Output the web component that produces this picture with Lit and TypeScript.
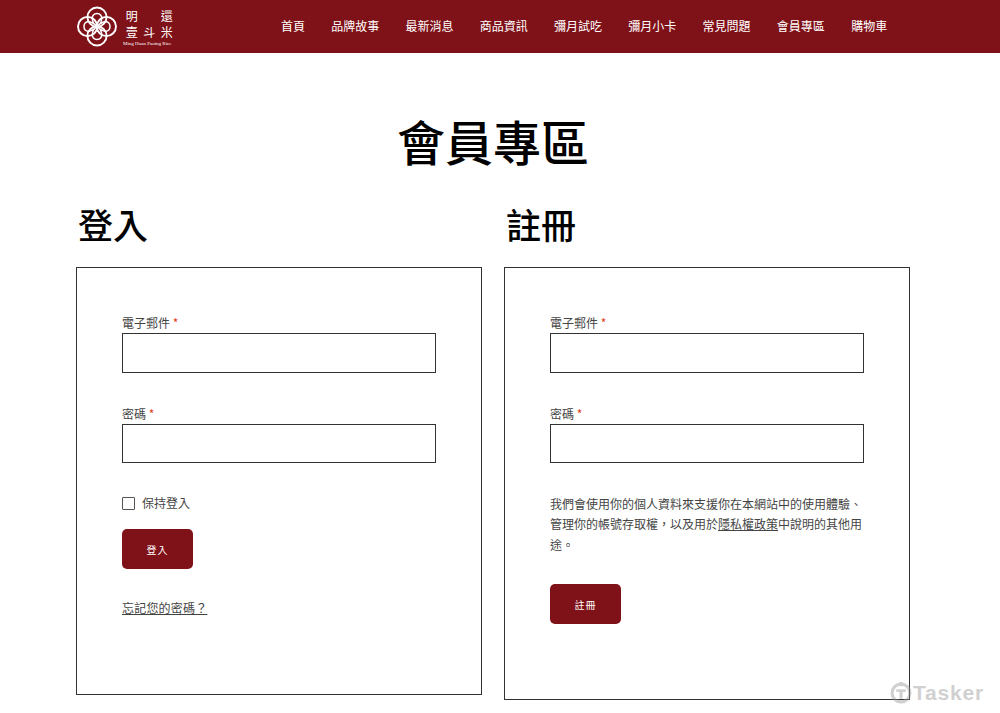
import { LitElement, html, css, svg } from 'lit';
import { customElement } from 'lit/decorators.js';

const NAV = ['首頁', '品牌故事', '最新消息', '商品資訊', '彌月試吃', '彌月小卡', '常見問題', '會員專區', '購物車'];

const knot = svg`
  <g fill="none" stroke="#fff" stroke-width="1.9">
    <circle cx="20" cy="10.6" r="9.6" />
    <circle cx="20" cy="29.4" r="9.6" />
    <circle cx="10.6" cy="20" r="9.6" />
    <circle cx="29.4" cy="20" r="9.6" />
    <path d="M20 20C14 16 13.5 7 20 7C26.5 7 26 16 20 20C26 14 33 13.5 33 20C33 26.5 26 26 20 20C26 24 26.5 33 20 33C13.5 33 14 24 20 20C14 26 7 26.5 7 20C7 13.5 14 14 20 20z" stroke-width="1.5" />
  </g>
`;

@customElement('app-root')
export class AppRoot extends LitElement {
  static styles = css`
    :host {
      display: block;
      position: relative;
      height: 713px;
      overflow: hidden;
      background: #fff;
      font-family: "Noto Sans CJK TC", "Liberation Sans", sans-serif;
      color: #444;
      font-size: 12px;
    }
    .header {
      height: 53px;
      background: #7f1118;
      display: flex;
      align-items: center;
      padding-left: 77px;
    }
    .logo {
      display: flex;
      align-items: center;
      gap: 6px;
      width: 204px;
      flex: none;
    }
    .logo svg {
      width: 40px;
      height: 41px;
      flex: none;
    }
    .logo-text {
      display: grid;
      grid-template-columns: repeat(3, 17.5px);
      color: #fff;
      font-size: 12px;
      line-height: 16px;
      margin-top: 2px;
    }
    .logo-text span {
      text-align: center;
    }
    .logo-text .sub {
      grid-column: 1 / 4;
      font-family: "Liberation Serif", serif;
      font-size: 5px;
      line-height: 8px;
      white-space: nowrap;
      text-align: left;
    }
    nav {
      display: flex;
      gap: 26.25px;
      color: #fff;
      line-height: 18px;
      margin-bottom: 2px;
    }
    h1 {
      margin: 0;
      padding-top: 57px;
      text-align: center;
      font-size: 48px;
      line-height: 60px;
      font-weight: 500;
      color: #000;
      padding-right: 14px;
    }
    .columns {
      display: flex;
      align-items: flex-start;
      gap: 22px;
      padding: 31px 0 0 76px;
    }
    .column {
      width: 406px;
    }
    h2 {
      margin: 0 0 20px 2px;
      font-size: 35px;
      line-height: 46px;
      font-weight: 500;
      color: #000;
    }
    .box {
      border: 1px solid #333;
      padding: 46px 45px 0;
      box-sizing: border-box;
    }
    .login {
      height: 428px;
    }
    .register {
      height: 433px;
    }
    label {
      display: block;
      line-height: 18px;
      margin-bottom: 1px;
    }
    label b {
      color: #e2401c;
      font-weight: 400;
    }
    .input {
      height: 40px;
      box-sizing: border-box;
      border: 1px solid #333;
      margin-bottom: 32px;
    }
    .input.short {
      height: 39px;
      margin-bottom: 31px;
    }
    .remember {
      display: flex;
      align-items: center;
      gap: 7px;
      line-height: 18px;
    }
    .check {
      width: 13px;
      height: 13px;
      box-sizing: border-box;
      border: 1px solid #555;
      border-radius: 1px;
    }
    .btn {
      display: flex;
      align-items: center;
      justify-content: center;
      width: 71px;
      height: 40px;
      border-radius: 5px;
      background: #7f1118;
      color: #fff;
      font-size: 10px;
      letter-spacing: 1px;
    }
    .remember + .btn {
      margin-top: 17px;
    }
    .forgot {
      display: block;
      margin-top: 30px;
      line-height: 18px;
      letter-spacing: 0.2px;
    }
    a {
      color: inherit;
      text-decoration: underline;
    }
    .policy {
      margin: 0 0 29px;
      line-height: 20.4px;
    }
    .watermark {
      position: absolute;
      left: 890px;
      top: 682px;
      display: flex;
      align-items: center;
      gap: 1px;
      opacity: 0.45;
      color: #999;
      font-family: "Liberation Sans", sans-serif;
      font-size: 21px;
      line-height: 22px;
      font-weight: 700;
      letter-spacing: 0.8px;
    }
    .watermark svg {
      width: 22px;
      height: 22px;
    }
  `;

  render() {
    return html`
      <header class="header">
        <div class="logo">
          <svg viewBox="0 0 40 40">${knot}</svg>
          <div class="logo-text">
            <span>明</span><span></span><span>還</span>
            <span>壹</span><span>斗</span><span>米</span>
            <span class="sub">Ming Huan Paoing Rice</span>
          </div>
        </div>
        <nav>${NAV.map((item) => html`<span>${item}</span>`)}</nav>
      </header>
      <h1>會員專區</h1>
      <div class="columns">
        <section class="column">
          <h2>登入</h2>
          <div class="box login">
            <label>電子郵件 <b>*</b></label>
            <div class="input"></div>
            <label>密碼 <b>*</b></label>
            <div class="input short"></div>
            <div class="remember"><span class="check"></span>保持登入</div>
            <div class="btn">登入</div>
            <a class="forgot">忘記您的密碼？</a>
          </div>
        </section>
        <section class="column">
          <h2>註冊</h2>
          <div class="box register">
            <label>電子郵件 <b>*</b></label>
            <div class="input"></div>
            <label>密碼 <b>*</b></label>
            <div class="input short"></div>
            <p class="policy">我們會使用你的個人資料來支援你在本網站中的使用體驗、管理你的帳號存取權，以及用於<a>隱私權政策</a>中說明的其他用途。</p>
            <div class="btn">註冊</div>
          </div>
        </section>
      </div>
      <div class="watermark">
        <svg viewBox="0 0 21 21">
          <circle cx="10.5" cy="10.5" r="8.5" fill="none" stroke="currentColor" stroke-width="3" />
          <rect x="9" y="0" width="3" height="4" fill="currentColor" />
          <path d="M6 7h9v2.5h-3V16H9V9.5H6z" fill="currentColor" />
        </svg>
        <span>Tasker</span>
      </div>
    `;
  }
}
